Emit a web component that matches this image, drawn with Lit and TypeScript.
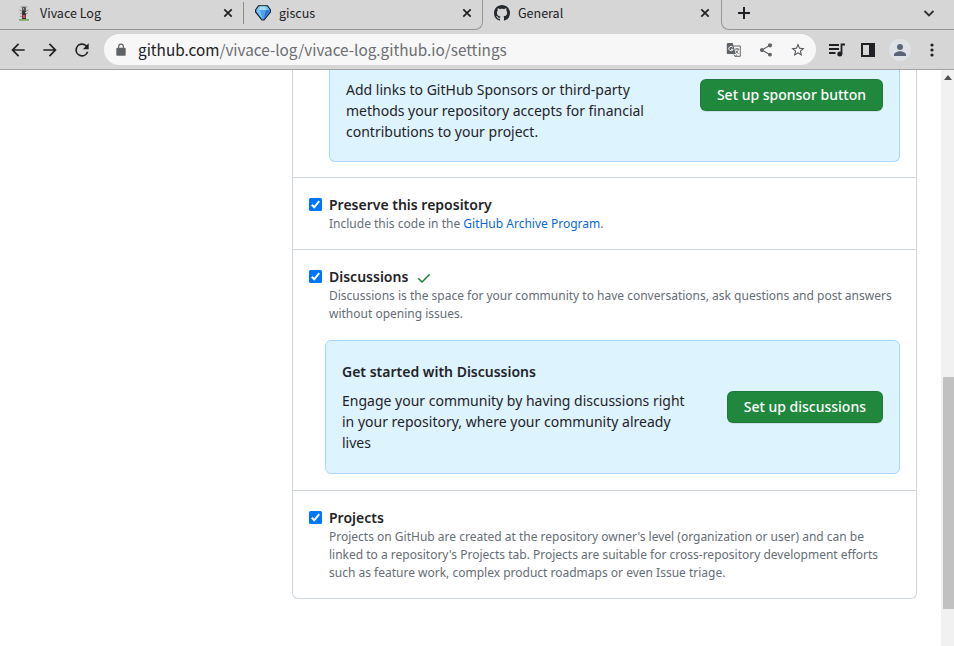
import { LitElement, html, css, svg } from "lit";
import { customElement, property } from "lit/decorators.js";

const check = html`<svg class="box" width="13" height="13" viewBox="0 0 13 13"><rect width="13" height="13" rx="1.5" fill="#0075ff"/><path d="M2.8 6.8 5.2 9.3 10.2 3.2" fill="none" stroke="#fff" stroke-width="2"/></svg>`;
const octocat = html`<svg width="16" height="16" viewBox="0 0 16 16" fill="#24292f"><path d="M8 0c4.42 0 8 3.58 8 8a8.013 8.013 0 0 1-5.45 7.59c-.4.08-.55-.17-.55-.38 0-.27.01-1.13.01-2.2 0-.75-.25-1.23-.54-1.48 1.78-.2 3.65-.88 3.65-3.95 0-.88-.31-1.59-.82-2.15.08-.2.36-1.02-.08-2.12 0 0-.67-.22-2.2.82-.64-.18-1.32-.27-2-.27-.68 0-1.36.09-2 .27-1.53-1.03-2.2-.82-2.2-.82-.44 1.1-.16 1.92-.08 2.12-.51.56-.82 1.28-.82 2.15 0 3.06 1.86 3.75 3.64 3.95-.23.2-.44.55-.51 1.07-.46.21-1.61.55-2.33-.66-.15-.24-.6-.83-1.23-.82-.67.01-.27.38.01.53.34.19.73.9.82 1.13.16.45.68 1.31 2.69.94 0 .67.01 1.3.01 1.49 0 .21-.15.45-.55.38A7.995 7.995 0 0 1 0 8c0-4.42 3.58-8 8-8Z"/></svg>`;
const gem = html`<svg width="16" height="16" viewBox="0 0 16 16"><path d="M3.5.8h9L15.4 5v2L9 15H7L.6 7V5Z" fill="#4da3f0" stroke="#111820" stroke-width="1.1"/><path d="M3.8 1.4h8.4L14.5 5H1.4Z" fill="#78c2f6"/><path d="M1.4 5.2h3.4L7.4 14Z" fill="#82c8fa"/><path d="M11 5.2h3.7L8.6 14Z" fill="#2474c9"/><path d="m5 1.6-.6 3.5h6.8l-1-3.5Z" fill="#a8dbfb"/></svg>`;
const insect = html`<svg width="16" height="16" viewBox="0 0 16 16"><path d="m7 4-2-3M9 4l2-3M6 6 3.5 5M10 6l2.5-1M6 9l-2-1M10 9l2-1M6 12l-2-1" fill="none" stroke="#777" stroke-width=".8"/><rect x="6" y="1.5" width="4" height="5" rx="1.5" fill="#555"/><rect x="6" y="6" width="4" height="8" fill="#333"/><path d="M7 3.2h1v1H7zm2 4h1v1H9z" fill="#ddd"/><path d="M6.5 10h3v3h-3z" fill="#c34d64"/><path d="M3 14h10v1.7H3z" fill="#79a958"/></svg>`;
const cross = html`<svg class="close" width="16" height="16" viewBox="0 0 16 16"><path d="m4.3 4.3 7.4 7.4m0-7.4-7.4 7.4" fill="none" stroke="#202124" stroke-width="1.7"/></svg>`;
const icon = (d: string, size = 20, color = "#202124") =>
  html`<svg width=${size} height=${size} viewBox="0 0 24 24" fill=${color}>${svg`<path d=${d}/>`}</svg>`;

@customElement("browser-tab")
class BrowserTab extends LitElement {
  @property() label = "";
  static styles = css`
    :host { display: flex; align-items: center; height: 26px; font: 12.5px/26px "Noto Sans CJK KR", sans-serif; color: #202124; box-sizing: border-box; }
    .icon { display: flex; margin-right: 8px; }
    .label { flex: 1; }
    .close { display: block; }
  `;
  render() { return html`<span class="icon"><slot></slot></span><span class="label">${this.label}</span>${cross}`; }
}

@customElement("feature-row")
class FeatureRow extends LitElement {
  @property() heading = "";
  static styles = css`
    :host { display: block; padding: 16px; border-top: 1px solid #d0d7de; }
    .head { display: flex; align-items: center; height: 21px; font-weight: 600; }
    .box { margin-right: 7px; }
    .note { margin-left: 20px; font-size: 12px; line-height: 18px; color: #656d76; }
  `;
  render() {
    return html`<div class="head">${check}<span>${this.heading}</span><slot name="mark"></slot></div>
      <div class="note"><slot></slot></div><slot name="promo"></slot>`;
  }
}

@customElement("app-root")
class AppRoot extends LitElement {
  static styles = css`
    :host { display: flex; flex-direction: column; height: 646px; width: 954px; overflow: hidden; background: #fff; color: #1f2328; font: 14px/21px "Noto Sans", sans-serif; }
    svg { display: block; flex: none; }
    .tabs { display: flex; height: 30px; background: #d6d6d6; flex: none; }
    .group { display: flex; box-sizing: border-box; width: 483px; height: 30px; border: solid #969696; border-width: 0 1px 1px 0; border-radius: 0 0 8px 0; }
    .first { width: 236px; padding-left: 16px; }
    .sep { width: 1px; height: 22px; margin: 2px 0 0 7px; background: #8b8b8b; }
    .second { width: 231px; padding-left: 11px; }
    .active { width: 238px; padding: 0 8px 0 11px; }
    .rest { flex: 1; display: flex; align-items: center; justify-content: space-between; box-sizing: border-box; padding: 0 15px 4px 12px; border: solid #969696; border-width: 0 0 1px 1px; border-radius: 0 0 0 8px; }
    .bar { height: 39px; flex: none; display: flex; align-items: center; background: #d6d6d6; border-bottom: 1px solid #a3a3a3; padding: 0 9px 0 8px; }
    .nav { display: flex; gap: 12px; }
    .address { display: flex; align-items: center; width: 712px; height: 31px; margin: 0 11px 0 12px; box-sizing: border-box; padding: 0 10px 0 10px; border-radius: 16px; background: #f7f7f7; }
    .url { flex: 1; margin-left: 10px; font: 15.3px/31px "Noto Sans CJK KR", sans-serif; color: #6b6e72; }
    .url b { font-weight: 400; color: #202124; }
    .actions { display: flex; gap: 16px; }
    .tools { display: flex; align-items: center; gap: 11px; }
    .avatar { display: flex; align-items: center; justify-content: center; width: 22px; height: 22px; border-radius: 50%; background: #dee1e6; }
    .view { display: flex; flex: 1; min-height: 0; overflow: hidden; justify-content: space-between; }
    .content { width: 625px; margin-left: 292px; }
    .card { box-sizing: border-box; border: 1px solid #d0d7de; border-top: 0; border-radius: 0 0 6px 6px; }
    .promo { display: flex; align-items: center; justify-content: space-between; box-sizing: border-box; background: #ddf4ff; border: 1px solid #a6d8ff; border-radius: 6px; padding: 0 16px; }
    .sponsor { height: 92px; margin: 0 16px 15px 36px; border-top: 0; border-radius: 0 0 6px 6px; align-items: flex-start; padding-top: 9px; }
    .discuss { height: 134px; margin: 17px 0 0 16px; }
    .discuss p { width: 350px; }
    p { width: 330px; margin: 0; }
    h3 { margin: 0 0 8px; font-size: 14px; line-height: 21px; font-weight: 600; }
    button { font: 500 14px/20px "Noto Sans", sans-serif; height: 32px; padding: 0 16px; color: #fff; background: #1f883d; border: 1px solid rgba(31,35,40,.15); border-radius: 6px; box-shadow: 0 1px 0 rgba(31,35,40,.1); white-space: nowrap; }
    a { color: #0969da; }
    .done { margin: 3px 0 0 8px; }
    h2 { margin: 40px 0 0; font: 400 24px/36px "Noto Sans", sans-serif; }
    .scroll { width: 13px; background: #f1f1f1; display: flex; flex-direction: column; align-items: flex-end; }
    .arrow { margin: 5px 2px 0 0; width: 0; height: 0; border: 4px solid transparent; border-top: 0; border-bottom: 5px solid #505050; }
    .thumb { width: 11px; height: 232px; margin-top: 297px; background: #c1c1c1; }
  `;
  render() {
    return html`
      <div class="tabs">
        <div class="group">
          <browser-tab class="first" label="Vivace Log">${insect}</browser-tab><i class="sep"></i>
          <browser-tab class="second" label="giscus">${gem}</browser-tab>
        </div>
        <browser-tab class="active" label="General">${octocat}</browser-tab>
        <div class="rest">
          <svg width="20" height="20" viewBox="0 0 20 20"><path d="M10 4v12M4 10h12" stroke="#202124" stroke-width="2"/></svg>
          <svg width="20" height="20" viewBox="0 0 20 20"><path d="m5.5 8 4.5 4.5L14.500 8" fill="none" stroke="#303134" stroke-width="1.8"/></svg>
        </div>
      </div>
      <div class="bar">
        <div class="nav">
          ${icon("M20 11H7.800l5.600-5.600L12 4l-8 8 8 8 1.400-1.400L7.800 13H20z")}
          ${icon("M4 11h12.200l-5.600-5.600L12 4l8 8-8 8-1.400-1.400 5.600-5.600H4z")}
          ${icon("M17.650 6.350A8 8 0 1 0 19.730 14h-2.080A6 6 0 1 1 12 6c1.660 0 3.140.69 4.220 1.780L13 11h7V4z")}
        </div>
        <div class="address">
          ${icon("M18 8h-1V6A5 5 0 0 0 7 6v2H6a2 2 0 0 0-2 2v10c0 1.100.9 2 2 2h12a2 2 0 0 0 2-2V10a2 2 0 0 0-2-2ZM9 6a3 3 0 0 1 6 0v2H9z", 14, "#5f6368")}
          <span class="url"><b>github.com</b>/vivace-log/vivace-log.github.io/settings</span>
          <div class="actions">
            <svg width="16" height="16" viewBox="0 0 16 16"><path d="M8 4h6.300v10.300H9.500" fill="#f7f7f7" stroke="#5f6368"/><path d="M1.800 1h5l3 11H1.800a1 1 0 0 1-1-1V2a1 1 0 0 1 1-1Z" fill="#5f6368"/><path d="M6.800 5.300a2.200 2.200 0 1 0 .3 2H5" fill="none" stroke="#f7f7f7"/><path d="M9 7h4M11 6v1m1.300 0c-.3 2-1.300 3-2.300 4m-.2-2.500L12.500 12M8 12.500 9.500 15l1-2.500" fill="none" stroke="#5f6368" stroke-width=".9"/></svg>
            ${icon("M18 16.080c-.76 0-1.440.3-1.960.77L8.910 12.700a3.300 3.300 0 0 0 0-1.400l7.050-4.110A3 3 0 1 0 15 5c0 .24.040.47.090.7L8.040 9.810a3 3 0 1 0 0 4.380l7.120 4.160a2.900 2.900 0 1 0 2.840-2.270Z", 16, "#5f6368")}
            ${icon("m22 9.240-7.190-.62L12 2 9.190 8.630 2 9.240l5.460 4.730L5.820 21 12 17.270 18.180 21l-1.630-7.030ZM12 15.400l-3.760 2.270 1-4.280-3.320-2.880 4.380-.38L12 6.100l1.710 4.040 4.380.38-3.320 2.880 1 4.280Z", 16, "#505358")}
          </div>
        </div>
        <div class="tools">
          <svg width="20" height="20" viewBox="0 0 20 20"><path d="M2 5h10M2 9h10M2 13h6.500" stroke="#202124" stroke-width="1.8"/><path d="M14.500 14V4.500H18" fill="none" stroke="#202124" stroke-width="1.800"/><circle cx="12.800" cy="14" r="2.500" fill="#202124"/></svg>
          <svg width="20" height="20" viewBox="0 0 20 20"><path d="M3 3h14v14H3ZM5 5v10h6V5Z" fill="#202124" fill-rule="evenodd"/></svg>
          <span class="avatar"><svg width="22" height="22" viewBox="0 0 22 22" fill="#5a6478"><circle cx="11" cy="8" r="3"/><path d="M5 17v-1.500c0-2 4-3.300 6-3.300s6 1.300 6 3.300V17Z"/></svg></span>
          <svg width="20" height="20" viewBox="0 0 20 20" fill="#202124"><circle cx="10" cy="5" r="1.600"/><circle cx="10" cy="10" r="1.600"/><circle cx="10" cy="15" r="1.600"/></svg>
        </div>
      </div>
      <div class="view">
        <main class="content">
          <div class="card">
            <div class="promo sponsor"><p>Add links to GitHub Sponsors or third-party methods your repository accepts for financial contributions to your project.</p><button>Set up sponsor button</button></div>
            <feature-row heading="Preserve this repository">Include this code in the <a>GitHub Archive Program</a>.</feature-row>
            <feature-row heading="Discussions">
              <svg slot="mark" class="done" width="16" height="16" viewBox="0 0 16 16" fill="#1a7f37"><path d="M13.780 4.220a.75.75 0 0 1 0 1.060l-7.250 7.250a.75.75 0 0 1-1.060 0L2.220 9.280a.75.75 0 0 1 1.060-1.060L6 10.940l6.720-6.720a.75.75 0 0 1 1.060 0Z"/></svg>
              Discussions is the space for your community to have conversations, ask questions and post answers without opening issues.
              <div slot="promo" class="promo discuss"><div><h3>Get started with Discussions</h3><p>Engage your community by having discussions right in your repository, where your community already lives</p></div><button>Set up discussions</button></div>
            </feature-row>
            <feature-row heading="Projects">Projects on GitHub are created at the repository owner's level (organization or user) and can be linked to a repository's Projects tab. Projects are suitable for cross-repository development efforts such as feature work, complex product roadmaps or even Issue triage.</feature-row>
          </div>
          <h2>Pull Requests</h2>
        </main>
        <div class="scroll"><i class="arrow"></i><div class="thumb"></div></div>
      </div>`;
  }
}
